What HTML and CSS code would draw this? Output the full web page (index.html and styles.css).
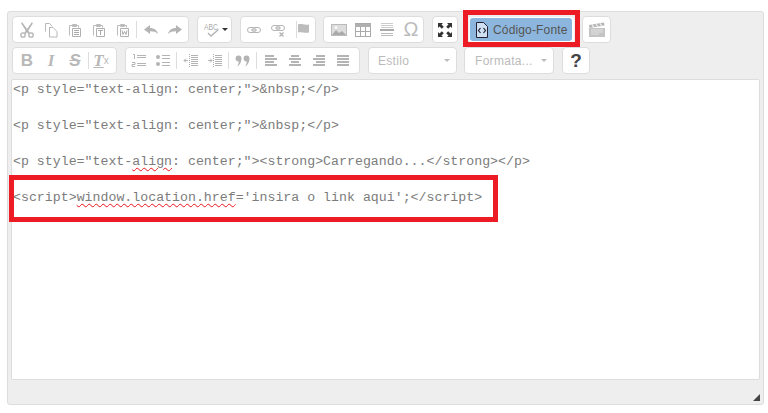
FILE: index.html
```html
<!DOCTYPE html>
<html lang="pt">
<head>
<meta charset="utf-8">
<title>Editor</title>
<link rel="stylesheet" href="styles.css">
</head>
<body>
<div class="editor">
  <div class="toolbar">
    <div class="row">
      <div class="group g-clip">
        <span class="btn"><svg width="16" height="17" viewBox="0 0 16 17"><path d="M3 1l5 7 5-7 .8 1.500L9.300 9.500l1.400 2.500-1.500 1L8 11l-1.200 2-1.500-1 1.400-2.500L2.200 2.500z" fill="#b4b4b4"/><circle cx="4" cy="14" r="2.200" fill="none" stroke="#b4b4b4" stroke-width="1.300"/><circle cx="12" cy="14" r="2.200" fill="none" stroke="#b4b4b4" stroke-width="1.300"/></svg></span>
        <span class="btn"><svg width="16" height="16" viewBox="0 0 16 16"><path d="M2.500 9.500v-8h4l3 3M6 5.500h4l4 4v5.500H6.500V5.500z" fill="none" stroke="#b8b8b8"/></svg></span>
        <span class="btn"><svg width="16" height="16" viewBox="0 0 16 16"><path d="M2.500 13.500v-10h9v2M5.500 2.500h4v2h-4z" fill="none" stroke="#bbb"/><path d="M5.500 6.500h8v8h-8z" fill="#fff" stroke="#b0b0b0"/><path d="M7 8.500h5M7 10.500h5M7 12.500h5" stroke="#aaa"/></svg></span>
        <span class="btn"><svg width="16" height="16" viewBox="0 0 16 16"><path d="M2.500 13.500v-10h9v2M5.500 2.500h4v2h-4z" fill="none" stroke="#bbb"/><path d="M5.500 6.500h8v8h-8z" fill="#fff" stroke="#b0b0b0"/><path d="M7 8.500h5M9.500 8.500v4.500" stroke="#aaa"/></svg></span>
        <span class="btn"><svg width="16" height="16" viewBox="0 0 16 16"><path d="M2.500 13.500v-10h9v2M5.500 2.500h4v2h-4z" fill="none" stroke="#bbb"/><path d="M5.500 6.500h8v8h-8z" fill="#fff" stroke="#b0b0b0"/><path d="M7 8.500l1 4 1.500-3 1.500 3 1-4" fill="none" stroke="#aaa"/></svg></span>
        <span class="sep"></span>
        <span class="btn btn-tail"><svg width="16" height="16" viewBox="0 0 16 16"><path d="M1 7.500L7 3v3c4 0 7 2 8 6-2-2-4-2.700-8-2.700V12z" fill="#b4b4b4"/></svg></span>
        <span class="btn"><svg width="16" height="16" viewBox="0 0 16 16"><path d="M15 7.500L9 3v3c-4 0-7 2-8 6 2-2 4-2.700 8-2.700V12z" fill="#b4b4b4"/></svg></span>
      </div>
      <div class="group g-spell">
        <span class="btn btn-spell"><svg width="17" height="17" viewBox="0 0 17 17"><path d="M7 16l-3.500-3.500 1-1L7 14l7-6 1 1z" fill="#b4b4b4"/><text x="0" y="9" class="abc" textLength="14" lengthAdjust="spacingAndGlyphs">ABC</text></svg><i class="caret dark"></i></span>
      </div>
      <div class="group g-link">
        <span class="btn"><svg width="16" height="16" viewBox="0 0 16 16"><rect x="1.500" y="5.500" width="8" height="5" rx="2.500" fill="none" stroke="#b4b4b4"/><rect x="6.500" y="5.500" width="8" height="5" rx="2.500" fill="none" stroke="#b4b4b4"/><path d="M5 8h6" stroke="#b4b4b4"/></svg></span>
        <span class="btn"><svg width="16" height="16" viewBox="0 0 16 16"><rect x="1.500" y="3.500" width="8" height="5" rx="2.500" fill="none" stroke="#b4b4b4"/><rect x="6.500" y="3.500" width="8" height="5" rx="2.500" fill="none" stroke="#b4b4b4"/><path d="M5 6h6" stroke="#b4b4b4"/><path d="M9.500 10.500l4 4M13.500 10.500l-4 4" stroke="#b4b4b4" stroke-width="1.400"/></svg></span>
        <span class="sep sep-flag"></span>
        <span class="btn btn-flag"><svg width="14" height="16" viewBox="0 0 14 16"><path d="M1 2.500c3-1.300 6 1 11 0v8c-5 1-8-1.200-11 0z" fill="#bcbcbc"/></svg></span>
      </div>
      <div class="group g-insert">
        <span class="btn"><svg width="16" height="16" viewBox="0 0 16 16"><rect x=".5" y="2.500" width="15" height="11" fill="#ddd" stroke="#bbb"/><path d="M1 13l4-5 3 3 3-2 4 4z" fill="#aaa"/><circle cx="5" cy="5.500" r="1.300" fill="#fff"/></svg></span>
        <span class="btn"><svg width="16" height="16" viewBox="0 0 16 16"><rect x=".5" y="1.500" width="15" height="13" fill="#fff" stroke="#aaa"/><path d="M0 2h16v3H0z" fill="#b0b0b0"/><path d="M5.500 5v9M10.500 5v9M1 9.500h14" stroke="#aaa"/></svg></span>
        <span class="btn"><svg width="16" height="16" viewBox="0 0 16 16"><path d="M2 1.500h12M2 3.500h12M2 5.500h12" stroke="#ccc"/><path d="M1 8h14" stroke="#aaa" stroke-width="2"/><path d="M2 11.500h12M2 13.500h12" stroke="#bbb"/></svg></span>
        <span class="btn omega">Ω</span>
      </div>
      <div class="group g-full">
        <span class="btn"><svg width="16" height="16" viewBox="0 0 16 16"><g fill="#333"><path d="M1 1h5L4.500 2.500 6.800 4.800 4.800 6.800 2.500 4.500 1 6z"/><path d="M15 1v5l-1.500-1.500-2.300 2.300-2-2 2.300-2.300L10 1z"/><path d="M1 15v-5l1.500 1.500 2.300-2.300 2 2-2.300 2.300L6 15z"/><path d="M15 15h-5l1.500-1.500-2.300-2.300 2-2 2.300 2.300L15 10z"/></g></svg></span>
      </div>
      <div class="group g-source">
        <span class="source"><svg width="12" height="16" viewBox="0 0 12 16"><path d="M1 .5h6.500L11.500 4.500v11H.5V.5z" fill="#cfe0f2" stroke="#223"/><path d="M4.500 6L2.500 8.500 4.500 11M7.500 6l2 2.500-2 2.500" fill="none" stroke="#223" stroke-width="1.200"/></svg>Código-Fonte</span>
      </div>
      <div class="group g-video">
        <span class="btn"><svg width="18" height="16" viewBox="0 0 18 16"><path d="M1 6h16v9H1z" fill="#c4c4c4"/><path d="M1 3l15-2.500.5 3L1.500 6z" fill="#b4b4b4"/><path d="M4 2.700l2 3M8 2l2 3M12 1.300l2 3" stroke="#eee" stroke-width="1.300"/><path d="M3 8h12M3 10h12M3 12h8" stroke="#e2e2e2"/></svg></span>
      </div>
    </div>
    <div class="row">
      <div class="group g-style">
        <span class="btn glyph bold">B</span>
        <span class="btn glyph ital">I</span>
        <span class="btn glyph strike">S</span>
        <span class="sep"></span>
        <span class="btn glyph clear"><em>T</em><sub>x</sub></span>
      </div>
      <div class="group g-para">
        <span class="btn"><svg width="16" height="16" viewBox="0 0 16 16"><path d="M6 2.500h9M6 4.500h9M6 10.500h9M6 12.500h9" stroke="#b4b4b4"/><path d="M2 1.500h1.500V6M1 9.500h3v2H1v2h3" fill="none" stroke="#b4b4b4"/></svg></span>
        <span class="btn"><svg width="16" height="16" viewBox="0 0 16 16"><circle cx="3" cy="4" r="2" fill="#b4b4b4"/><circle cx="3" cy="11" r="2" fill="#b4b4b4"/><path d="M7 2.500h8M7 5.500h8M7 9.500h8M7 12.500h8" stroke="#b4b4b4"/></svg></span>
        <span class="sep"></span>
        <span class="btn btn-tail"><svg width="16" height="16" viewBox="0 0 16 16"><path d="M8 2.500h7M8 4.500h7M8 6.500h7M8 8.500h7M8 10.500h7M8 12.500h7" stroke="#b4b4b4"/><path d="M6.500 1v14" stroke="#aaa" stroke-dasharray="1 1"/><path d="M1 7.500h4M1 7.500l2-2M1 7.500l2 2" stroke="#b4b4b4" fill="none"/></svg></span>
        <span class="btn"><svg width="16" height="16" viewBox="0 0 16 16"><path d="M8 2.500h7M8 4.500h7M8 6.500h7M8 8.500h7M8 10.500h7M8 12.500h7" stroke="#b4b4b4"/><path d="M6.500 1v14" stroke="#aaa" stroke-dasharray="1 1"/><path d="M1 7.500h4M5 7.500l-2-2M5 7.500l-2 2" stroke="#b4b4b4" fill="none"/></svg></span>
        <span class="sep"></span>
        <span class="btn btn-tail"><svg width="16" height="16" viewBox="0 0 16 16"><path d="M3.500 2.500a3 3 0 0 1 3 3c0 3.500-2 7-4.500 8 1-1.300 1.700-3 1.700-5a3 3 0 0 1-.2-6zM11.500 2.500a3 3 0 0 1 3 3c0 3.500-2 7-4.500 8 1-1.300 1.700-3 1.700-5a3 3 0 0 1-.2-6z" fill="#b4b4b4"/></svg></span>
        <span class="sep"></span>
        <span class="btn btn-tail"><svg width="16" height="16" viewBox="0 0 16 16"><path d="M2 2h9v2H2zM2 5h12v2H2zM2 8h9v2H2zM2 11h12v2H2z" fill="#b4b4b4"/></svg></span>
        <span class="btn"><svg width="16" height="16" viewBox="0 0 16 16"><path d="M4 2h8v2H4zM2 5h12v2H2zM4 8h8v2H4zM2 11h12v2H2z" fill="#b4b4b4"/></svg></span>
        <span class="btn"><svg width="16" height="16" viewBox="0 0 16 16"><path d="M5 2h9v2H5zM2 5h12v2H2zM5 8h9v2H5zM2 11h12v2H2z" fill="#b4b4b4"/></svg></span>
        <span class="btn"><svg width="16" height="16" viewBox="0 0 16 16"><path d="M2 2h12v2H2zM2 5h12v2H2zM2 8h12v2H2zM2 11h12v2H2z" fill="#b4b4b4"/></svg></span>
      </div>
      <div class="group combo c-style"><span>Estilo</span><i class="caret"></i></div>
      <div class="group combo c-format"><span>Formata...</span><i class="caret"></i></div>
      <div class="group g-help">?</div>
    </div>
  </div>
  <pre class="source-area">&lt;p style="text-align: center;"&gt;&amp;nbsp;&lt;/p&gt;

&lt;p style="text-align: center;"&gt;&amp;nbsp;&lt;/p&gt;

&lt;p style="text-<span class="spell">align</span>: center;"&gt;&lt;strong&gt;Carregando...&lt;/strong&gt;&lt;/p&gt;

&lt;script&gt;<span class="spell">window.location.href</span>='insira o link aqui';&lt;/script&gt;</pre>
  <div class="bottom"><svg width="9" height="7" viewBox="0 0 9 7"><path d="M9 0v7H2z" fill="#444"/></svg></div>
</div>
<div class="mark mark-source"></div>
<div class="mark mark-script"></div>
</body>
</html>
```
FILE: styles.css
```css
* { box-sizing: border-box; }
html, body { margin: 0; padding: 0; background: #fff; }
body { width: 768px; height: 413px; position: relative; overflow: hidden; font-family: "Liberation Sans", Arial, sans-serif; }

.editor {
  position: absolute; left: 7px; top: 11px; width: 757px; height: 394px;
  background: #eee; border: 1px solid #ddd; border-radius: 3px;
  padding: 4px 3px 0 3px;
  display: flex; flex-direction: column;
}
.toolbar { display: flex; flex-direction: column; gap: 4px; height: 63px; padding-left: 1px; }
.row { display: flex; height: 27px; }
.group {
  height: 27px; background: #fff; border: 1px solid #ddd; border-radius: 4px;
  display: flex; align-items: center; flex: none;
}
.btn { width: 24px; height: 24px; display: flex; align-items: center; justify-content: center; flex: none; }
.sep { width: 1px; height: 17px; background: #ddd; flex: none; margin-left: 1px; }
.btn-tail { margin-left: 2px; }

.g-clip { width: 177px; padding-left: 2px; }
.g-spell { width: 35px; margin-left: 8px; padding-left: 6px; }
.btn-spell { width: 26px; justify-content: flex-start; }
.abc { font-size: 9px; fill: #aaa; font-family: "Liberation Sans", sans-serif; }
.g-link { width: 76px; margin-left: 8px; padding-left: 1px; }
.sep-flag { margin-left: 6px; }
.btn-flag { width: 14px; }
.g-insert { width: 101px; margin-left: 7px; padding-left: 3px; }
.omega { font-size: 20px; color: #bbb; font-family: "Liberation Sans", sans-serif; }
.g-full { width: 26px; margin-left: 8px; }
.g-source { width: 107px; margin-left: 10px; padding: 1px; border-color: #eee; }
.source {
  width: 102px; height: 23px; background: #8cb6dd; border-radius: 3px;
  display: flex; align-items: center; padding-left: 6px; gap: 5px;
  font-size: 12px; letter-spacing: .15px; color: #555;
}
.g-video { width: 29px; margin-left: 7px; padding-left: 2px; }

.glyph { font-size: 17px; color: #b8b8b8; }
.bold { font-weight: bold; }
.ital { font-style: italic; font-family: "Liberation Serif", serif; font-weight: bold; }
.strike { font-weight: bold; font-style: italic; text-decoration: line-through; }
.clear em { font-family: "Liberation Serif", serif; font-weight: bold; text-decoration: underline; }
.clear sub { font-size: 10px; }

.g-style { width: 105px; padding-left: 2px; }
.g-para { width: 235px; margin-left: 8px; padding-left: 1px; }
.combo { color: #bbb; font-size: 12px; letter-spacing: .3px; position: relative; padding-left: 9px; }
.c-style { width: 89px; margin-left: 8px; }
.c-format { width: 90px; margin-left: 7px; padding-left: 10px; }
.caret { width: 0; height: 0; border: 3px solid transparent; border-top: 3px solid #bbb; border-bottom: 0; position: absolute; right: 6px; top: 11px; }
.caret.dark { position: static; border-top-color: #333; margin-left: 1px; }
.g-help { width: 28px; margin-left: 8px; justify-content: center; font-size: 19px; font-weight: bold; color: #444; }

.source-area {
  margin: 0; width: 749px; height: 301px; flex: none;
  background: #fff; border: 1px solid #ddd; border-radius: 2px;
  padding: 1px 0 0 1px;
  font-family: "Liberation Mono", "Courier New", monospace; font-size: 13.25px; line-height: 18px; color: #7c7c7c;
  overflow: hidden;
}
.spell { text-decoration: underline wavy #e8141c 1px; text-underline-offset: 2px; }
.bottom { flex: 1; display: flex; justify-content: flex-end; align-items: flex-end; padding: 0 0 3px 0; }

.mark { position: absolute; border: 5px solid #ed1c24; }
.mark-source { left: 463px; top: 10px; width: 117px; height: 37px; }
.mark-script { left: 9px; top: 175px; width: 489px; height: 47px; }
```
